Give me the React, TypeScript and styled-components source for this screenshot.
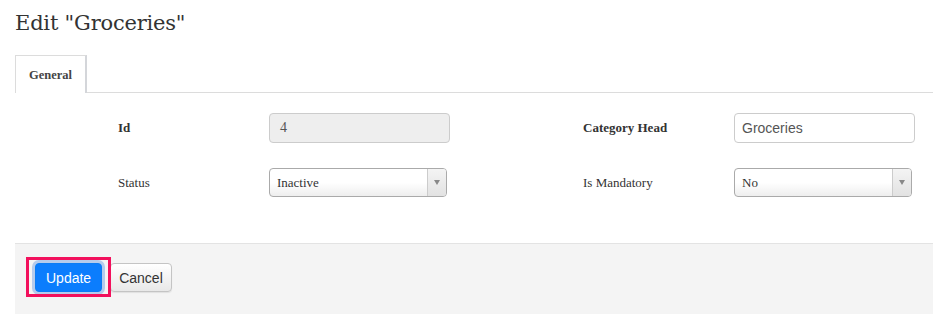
import styled, { createGlobalStyle } from "styled-components"

const Global = createGlobalStyle`
    body {
        margin: 0;
        background: #fff;
        font-family: "Liberation Serif", "Times New Roman", serif;
        color: #333;
    }
`

const Page = styled.div`
    padding: 0 0 0 15px;
    overflow: hidden;
    height: 314px;
`

const Title = styled.h1`
    margin: 0;
    padding-top: 11px;
    height: 55px;
    box-sizing: border-box;
    font-family: "DejaVu Serif", serif;
    font-weight: normal;
    font-size: 21px;
    color: #333;
    letter-spacing: -0.2px;
`

const TabBar = styled.div`
    display: flex;
    border-bottom: 1px solid #dcdcdc;
    height: 37px;
`

const Tab = styled.div`
    width: 72px;
    height: 38px;
    box-sizing: border-box;
    border: 1px solid #dcdcdc;
    border-right: 2px solid #d4d6da;
    border-bottom: none;
    background: #fff;
    display: flex;
    align-items: center;
    justify-content: center;
    font-weight: bold;
    font-size: 12.5px;
    color: #444;
    padding-top: 2px;
`

const Body = styled.div`
    display: grid;
    grid-template-columns: 332px 332px;
    column-gap: 133px;
    row-gap: 26px;
    padding: 20px 0 46px 103px;
`

const Field = styled.div`
    display: flex;
    align-items: center;
    height: 29px;
`

const Label = styled.label<{ $bold?: boolean }>`
    width: 151px;
    font-size: 13px;
    font-weight: ${p => (p.$bold ? "bold" : "normal")};
    color: #333;
`

const Input = styled.div<{ $disabled?: boolean; $sans?: boolean }>`
    width: 181px;
    height: 30px;
    box-sizing: border-box;
    border: 1px solid #ccc;
    border-radius: 4px;
    background: ${p => (p.$disabled ? "#eee" : "#fff")};
    display: flex;
    align-items: center;
    padding-left: ${p => (p.$sans ? "7px" : "10px")};
    font-family: ${p => (p.$sans ? '"Liberation Sans", Arial, sans-serif' : '"Liberation Serif", serif')};
    font-size: 14px;
    color: #555;
`

const Select = styled.div`
    width: 178px;
    height: 29px;
    box-sizing: border-box;
    border: 1px solid #aaa;
    border-radius: 4px;
    background: linear-gradient(#fff 50%, #eee);
    display: flex;
    align-items: stretch;
    font-size: 13px;
    color: #333;
`

const SelectText = styled.span`
    flex: 1;
    display: flex;
    align-items: center;
    padding-left: 7px;
`

const Arrow = styled.span`
    width: 18px;
    border-left: 1px solid #ccc;
    display: flex;
    align-items: center;
    justify-content: center;
    background: linear-gradient(#f4f4f4, #e2e2e2);
    border-radius: 0 3px 3px 0;

    &::after {
        content: "";
        border-left: 3px solid transparent;
        border-right: 3px solid transparent;
        border-top: 5px solid #888;
    }
`

const Footer = styled.div`
    background: #f4f4f4;
    border-top: 1px solid #e3e3e3;
    padding: 19px 0 30px 20px;
    display: flex;
    align-items: center;
    gap: 8px;
`

const Highlight = styled.span`
    position: relative;
    display: inline-flex;

    &::after {
        content: "";
        position: absolute;
        left: -9px;
        right: -9px;
        top: -6px;
        bottom: -5px;
        border: 3px solid #f2105c;
        pointer-events: none;
    }
`

const Button = styled.button<{ $primary?: boolean }>`
    height: 29px;
    box-sizing: border-box;
    padding: 0 ${p => (p.$primary ? "10px" : "8px")};
    font-family: "Liberation Sans", Arial, sans-serif;
    font-size: 14px;
    border-radius: 4px;
    cursor: pointer;
    color: ${p => (p.$primary ? "#fff" : "#333")};
    border: 1px solid ${p => (p.$primary ? "#0a7cf5" : "#c4c4c4")};
    background: ${p => (p.$primary ? "#0b7dfd" : "linear-gradient(#fff, #e8e8e8)")};
    box-shadow: ${p => (p.$primary ? "0 0 0 3px rgba(130, 170, 230, 0.55)" : "0 1px 1px rgba(0,0,0,0.08)")};
`

const App = () => {
    return (
        <Page>
            <Global />
            <Title>Edit "Groceries"</Title>
            <TabBar>
                <Tab>General</Tab>
            </TabBar>
            <Body>
                <Field>
                    <Label $bold>Id</Label>
                    <Input $disabled>4</Input>
                </Field>
                <Field>
                    <Label $bold>Category Head</Label>
                    <Input $sans>Groceries</Input>
                </Field>
                <Field>
                    <Label>Status</Label>
                    <Select>
                        <SelectText>Inactive</SelectText>
                        <Arrow />
                    </Select>
                </Field>
                <Field>
                    <Label>Is Mandatory</Label>
                    <Select>
                        <SelectText>No</SelectText>
                        <Arrow />
                    </Select>
                </Field>
            </Body>
            <Footer>
                <Highlight>
                    <Button $primary>Update</Button>
                </Highlight>
                <Button>Cancel</Button>
            </Footer>
        </Page>
    )
}

export default App
